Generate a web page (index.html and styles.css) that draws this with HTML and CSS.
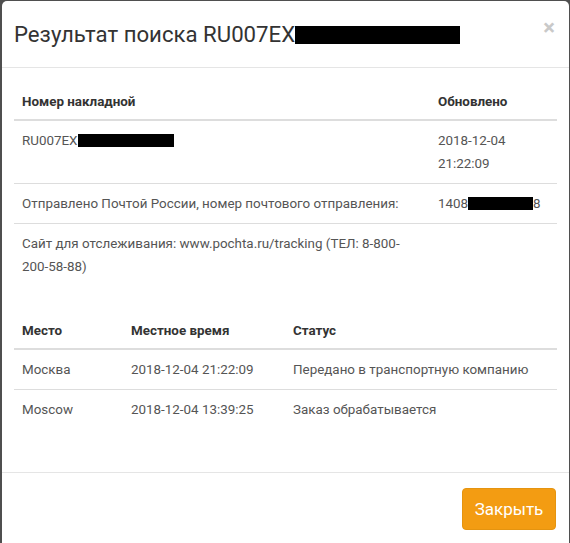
FILE: index.html
```html
<!DOCTYPE html>
<html lang="ru">
<head>
<meta charset="utf-8">
<title>Результат поиска</title>
<link rel="stylesheet" href="styles.css">
</head>
<body>
<div class="modal">
  <div class="modal-header">
    <h4 class="modal-title">Результат поиска RU007EX<span class="redact redact-title"></span></h4>
    <span class="close">×</span>
  </div>
  <div class="modal-body">
    <table class="tbl tbl-info">
      <colgroup><col class="c-main"><col></colgroup>
      <thead>
        <tr><th>Номер накладной</th><th>Обновлено</th></tr>
      </thead>
      <tbody>
        <tr><td>RU007EX<span class="redact redact-num"></span></td><td>2018-12-04<br>21:22:09</td></tr>
        <tr><td>Отправлено Почтой России, номер почтового отправления:</td><td>1408<span class="redact redact-post"></span>8</td></tr>
        <tr class="last"><td>Сайт для отслеживания: www.pochta.ru/tracking (ТЕЛ: 8-800-200-58-88)</td><td></td></tr>
      </tbody>
    </table>
    <table class="tbl tbl-track">
      <colgroup><col class="c-place"><col class="c-time"><col></colgroup>
      <thead>
        <tr><th>Место</th><th>Местное время</th><th>Статус</th></tr>
      </thead>
      <tbody>
        <tr><td>Москва</td><td>2018-12-04 21:22:09</td><td>Передано в транспортную компанию</td></tr>
        <tr class="last"><td>Moscow</td><td>2018-12-04 13:39:25</td><td>Заказ обрабатывается</td></tr>
      </tbody>
    </table>
  </div>
  <div class="modal-footer">
    <button class="btn">Закрыть</button>
  </div>
</div>
</body>
</html>
```

FILE: styles.css
```css
html, body {
  margin: 0;
  padding: 0;
  background: #4f4f4f;
  height: 100%;
  overflow: hidden;
}
body {
  font-family: Roboto, "Liberation Sans", sans-serif;
  font-size: 13.4px;
  color: #555;
}
.modal {
  margin: 1px 1px 0 2px;
  background: #fff;
  border-radius: 5px;
  height: 560px;
}
.modal-header {
  height: 66px;
  padding: 0 13px 0 12px;
  display: flex;
  align-items: center;
  justify-content: space-between;
  border-bottom: 1px solid #e5e5e5;
}
.modal-title {
  margin: 0;
  font-size: 22.2px;
  font-weight: 400;
  color: #333;
  line-height: 24px;
  display: flex;
  align-items: center;
}
.redact {
  display: inline-block;
  background: #000;
}
.redact-title {
  width: 165px;
  height: 18px;
  margin-top: 2px;
}
.redact-num {
  width: 96px;
  height: 13px;
  vertical-align: -2px;
}
.redact-post {
  width: 65px;
  height: 13px;
  vertical-align: -2px;
}
.close {
  font-size: 22px;
  font-weight: 700;
  color: #c9c9c9;
  line-height: 1;
  margin-top: -12px;
  margin-right: 1px;
}
.modal-body {
  padding: 14px 12px 0 12px;
  height: 390px;
}
.tbl {
  width: 100%;
  border-collapse: collapse;
}
.tbl th, .tbl td {
  padding: 8px 8px;
  line-height: 23px;
  text-align: left;
  vertical-align: top;
}
.tbl th {
  font-weight: 700;
  color: #333;
  padding-bottom: 6px;
  border-bottom: 2px solid #ddd;
}
.tbl td {
  border-bottom: 1px solid #ddd;
}
.tbl tr.last td {
  border-bottom: none;
}
.c-main { width: 416px; }
.tbl-info { margin-bottom: 25px; }
.c-place { width: 109px; }
.c-time { width: 162px; }
.modal-footer {
  border-top: 1px solid #e5e5e5;
  padding: 15px 13px 0 0;
  display: flex;
  justify-content: flex-end;
}
.btn {
  font-family: Roboto, "Liberation Sans", sans-serif;
  font-size: 17px;
  color: #fff;
  background: #f39c12;
  border: 1px solid #e59410;
  border-radius: 4px;
  width: 94px;
  height: 42px;
  padding: 0;
}
```
